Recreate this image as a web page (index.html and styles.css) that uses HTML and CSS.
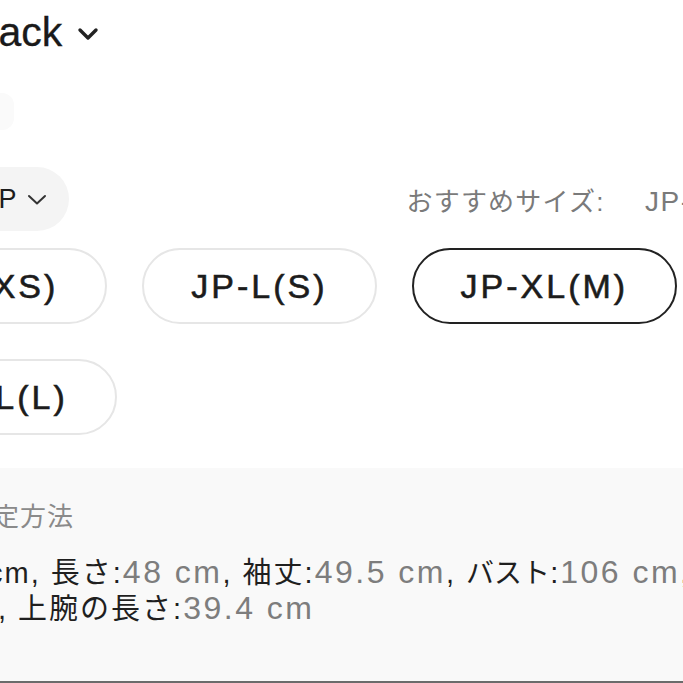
FILE: index.html
```html
<!DOCTYPE html>
<html lang="ja">
<head>
<meta charset="utf-8">
<title>Size</title>
<link rel="stylesheet" href="styles.css">
</head>
<body>
<div class="page">
  <div class="title">
    <span class="title-text">Black</span>
    <svg class="chev-bold" viewBox="0 0 22 14" width="22" height="14"><path d="M3 3 L11 11 L19 3"/></svg>
  </div>
  <div class="swatch"></div>
  <div class="region-row">
    <div class="region">
      <span>JP</span>
      <svg class="chev-thin" viewBox="0 0 20 11" width="20" height="11"><path d="M2 2 L10 9.5 L18 2"/></svg>
    </div>
    <div class="recommend">おすすめサイズ: <span class="rec-size">JP-XL(M)</span></div>
  </div>
  <div class="sizes">
    <div class="size">JP-M(XS)</div>
    <div class="size">JP-L(S)</div>
    <div class="size selected">JP-XL(M)</div>
    <div class="size">JP-XXL(L)</div>
  </div>
  <div class="measure">
    <div class="measure-title">測定方法</div>
    <p class="line l1"><span class="lab">cm, 長さ:</span><span class="val">48 cm</span><span class="lab">, 袖丈:</span><span class="val">49.5 cm</span><span class="lab">, <span class="kana">バスト</span>:</span><span class="val">106 cm</span><span class="lab">, 肩幅:</span><span class="val">45 cm</span></p>
    <p class="line l2"><span class="lab">, 上腕の長さ:</span><span class="val">39.4 cm</span></p>
  </div>
</div>
</body>
</html>
```
FILE: styles.css
```css
html, body {
  margin: 0;
  padding: 0;
  background: #ffffff;
}
body {
  width: 683px;
  height: 683px;
  overflow: hidden;
  font-family: "Liberation Sans", "Noto Sans CJK JP", sans-serif;
  color: #1c1c1c;
}
.page {
  width: 683px;
  display: flex;
  flex-direction: column;
}
.title {
  height: 64px;
  margin-left: -38px;
  display: flex;
  align-items: center;
  gap: 15px;
  white-space: nowrap;
}
.title-text {
  font-size: 41px;
  color: #1a1a1a;
  -webkit-text-stroke: 0.3px #1a1a1a;
}
.chev-bold {
  margin-top: 4px;
  fill: none;
  stroke: #222;
  stroke-width: 3.4;
  stroke-linecap: round;
  stroke-linejoin: round;
}
.swatch {
  margin-top: 29px;
  margin-left: -30px;
  width: 44px;
  height: 37px;
  border-radius: 12px;
  background: #fafafa;
}
.region-row {
  margin-top: 37px;
  height: 64px;
  display: flex;
  align-items: center;
  white-space: nowrap;
}
.region {
  margin-left: -30px;
  height: 64px;
  box-sizing: border-box;
  padding: 0 22px 0 15px;
  border-radius: 32px;
  background: #f4f4f4;
  display: flex;
  align-items: center;
  gap: 10px;
  font-size: 27px;
  color: #1c1c1c;
}
.chev-thin {
  fill: none;
  stroke: #333;
  stroke-width: 2;
  stroke-linecap: round;
  stroke-linejoin: round;
}
.recommend {
  margin-left: 338px;
  font-size: 26px;
  letter-spacing: 1.2px;
  color: #7a7a7a;
}
.rec-size {
  margin-left: 32px;
  font-size: 28px;
  letter-spacing: 1.5px;
}
.sizes {
  margin-top: 17px;
  margin-left: -162px;
  width: 900px;
  display: flex;
  flex-wrap: wrap;
  gap: 35px;
}
.size {
  height: 76px;
  box-sizing: border-box;
  padding: 0 47px;
  border: 2px solid #e6e6e6;
  border-radius: 38px;
  display: flex;
  align-items: center;
  justify-content: center;
  font-size: 34px;
  letter-spacing: 3px;
  color: #1c1c1c;
  -webkit-text-stroke: 0.6px #1c1c1c;
  white-space: nowrap;
}
.size:last-child {
  margin-left: -3px;
}
.size.selected {
  border-color: #222;
}
.measure {
  margin-top: 33px;
  margin-left: -20px;
  width: 723px;
  height: 213px;
  background: #f9f9f9;
  border-bottom: 2px solid #6b6b6b;
}
.measure-title {
  margin-top: 31px;
  margin-left: -14px;
  height: 36px;
  line-height: 36px;
  font-size: 26px;
  letter-spacing: 1px;
  color: #8a8a8a;
  white-space: nowrap;
}
.line {
  margin: 0;
  height: 36px;
  line-height: 36px;
  white-space: nowrap;
}
.l1 {
  margin-top: 19px;
  margin-left: 8px;
}
.l2 {
  margin-left: 18px;
}
.lab {
  font-size: 29px;
  letter-spacing: 2px;
  color: #1f1f1f;
}
.kana {
  font-size: 28px;
  letter-spacing: 0;
}
.val {
  font-size: 32px;
  letter-spacing: 2.5px;
  color: #7d7d7d;
}
```
